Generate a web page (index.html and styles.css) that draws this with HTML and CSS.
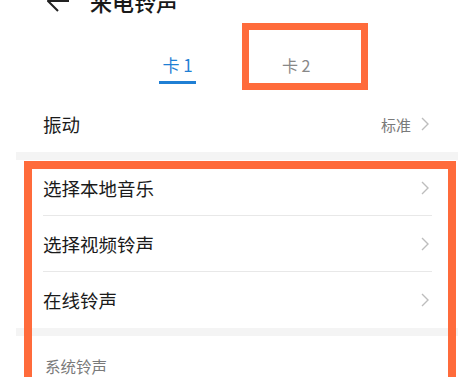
FILE: index.html
```html
<!DOCTYPE html>
<html lang="zh-CN">
<head>
  <meta charset="UTF-8" />
  <meta name="viewport" content="width=device-width, initial-scale=1.0">
  <title>来电铃声</title>
  <link rel="stylesheet" href="styles.css">
</head>
<body>
  <header class="top-bar">
    <svg class="back" width="22" height="22" viewBox="0 0 22 22">
      <polyline points="11,1 1,11 11,21" />
      <line x1="1" y1="11" x2="22" y2="11" />
    </svg>
    <h1>来电铃声</h1>
  </header>

  <!-- SIM tabs -->
  <nav class="tabs">
    <div class="tab active">卡 1</div>
    <div class="tab">卡 2</div>
  </nav>

  <div class="list">
    <div class="row">
      <span class="label">振动</span>
      <span class="value">标准</span>
      <svg class="chev" width="8" height="14" viewBox="0 0 8 14"><polyline points="1,1 7,7 1,13" /></svg>
    </div>
  </div>

  <div class="band"></div>

  <div class="list">
    <div class="row">
      <span class="label">选择本地音乐</span>
      <svg class="chev" width="8" height="14" viewBox="0 0 8 14"><polyline points="1,1 7,7 1,13" /></svg>
    </div>
    <div class="row">
      <span class="label">选择视频铃声</span>
      <svg class="chev" width="8" height="14" viewBox="0 0 8 14"><polyline points="1,1 7,7 1,13" /></svg>
    </div>
    <div class="row last">
      <span class="label">在线铃声</span>
      <svg class="chev" width="8" height="14" viewBox="0 0 8 14"><polyline points="1,1 7,7 1,13" /></svg>
    </div>
  </div>

  <div class="band"></div>

  <div class="list">
    <div class="section-title">系统铃声</div>
  </div>

  <!-- annotation boxes -->
  <div class="mark mark-tab"></div>
  <div class="mark mark-list"></div>
</body>
</html>
```

FILE: styles.css
```css
:root {
  --txt: #1a1a1a;
  --sub: #7a7a7a;
  --blue: #1f7fd4;
  --line: #e8e8e8;
  --band: #f4f4f4;
  --mark: #ff6b3b;
}
* { box-sizing: border-box; }
html, body { height: 100%; }
body {
  margin: 0;
  background: #fff;
  font-family: "Noto Sans CJK SC", "Noto Sans", sans-serif;
  color: var(--txt);
  position: relative;
  overflow: hidden;
}
.top-bar {
  display: flex;
  align-items: center;
  height: 22px;
  margin-top: -10px;
  padding-left: 47px;
}
.back {
  fill: none;
  stroke: #222;
  stroke-width: 2;
}
.top-bar h1 {
  margin: 0 0 0 21px;
  font-size: 22px;
  line-height: 22px;
  font-weight: 500;
}
/* tabs */
.tabs {
  display: flex;
  align-items: baseline;
  padding: 43px 0 0 159px;
}
.tab {
  font-size: 16px;
  line-height: 20px;
  color: #888;
  margin-left: 86px;
}
.tab.active {
  margin-left: 0;
  width: 37px;
  text-align: center;
  font-size: 17px;
  color: var(--blue);
  padding-bottom: 6px;
  border-bottom: 3px solid var(--blue);
}
/* list */
.list {
  margin-left: 16px;
}
.tabs + .list { margin-top: 12px; }
.row {
  display: flex;
  align-items: center;
  height: 56px;
  margin: 0 26px 0 27px;
  border-bottom: 1px solid var(--line);
}
.list:first-of-type .row,
.row.last { border-bottom: none; }
.label {
  flex: 1;
  font-size: 18.5px;
}
.value {
  font-size: 15px;
  color: var(--sub);
  margin-right: 10px;
}
.chev {
  margin-right: 3px;
  fill: none;
  stroke: #bdbdbd;
  stroke-width: 1.4;
}
.band {
  height: 8px;
  margin-left: 16px;
  background: var(--band);
}
.section-title {
  padding: 20px 0 0 29px;
  font-size: 15.5px;
  line-height: 20px;
  color: var(--sub);
}
/* orange highlight boxes */
.mark {
  position: absolute;
  border: 7px solid var(--mark);
}
.mark-tab {
  left: 242px;
  top: 23px;
  width: 126px;
  height: 67px;
}
.mark-list {
  left: 24px;
  top: 161px;
  width: 432px;
  height: 260px;
  border-width: 8px;
}
```
